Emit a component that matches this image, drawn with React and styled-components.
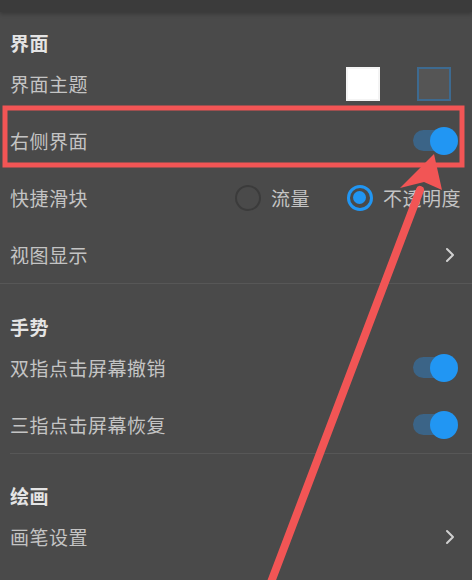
import React from "react";
import styled, { createGlobalStyle } from "styled-components";

const Global = createGlobalStyle`
  html, body { margin: 0; padding: 0; background: #4a4a4a; }
  body { font-family: "Noto Sans CJK SC", "Noto Sans", sans-serif; }
`;

const Page = styled.div`
  position: relative;
  width: 472px;
  height: 580px;
  overflow: hidden;
  background: #4a4a4a;
`;

const TopBar = styled.div`
  height: 12px;
  background: #3b3b3b;
  box-shadow: 0 2px 4px rgba(0,0,0,0.25);
`;

const Section = styled.section`
  display: flex;
  flex-direction: column;
  padding-top: ${p => p.$top}px;
`;

const Header = styled.div`
  height: 26px;
  display: flex;
  align-items: center;
  padding-left: 10px;
  font-size: 19px;
  font-weight: 700;
  color: #e4e4e4;
  letter-spacing: 0.5px;
`;

const Row = styled.div`
  height: 57px;
  display: flex;
  align-items: center;
  justify-content: space-between;
  padding: 0 13px 0 10px;
`;

const Label = styled.span`
  font-size: 19px;
  color: #c4c4c4;
  letter-spacing: 0.5px;
`;

const Divider = styled.div`
  height: 1px;
  background: #575757;
  margin-left: ${p => (p.$inset ? 10 : 0)}px;
`;

const Swatches = styled.div`
  display: flex;
  gap: 37px;
  margin-right: 8px;
`;

const Swatch = styled.div`
  width: 34px;
  height: 34px;
  box-sizing: border-box;
  background: ${p => (p.$light ? "#ffffff" : "#555555")};
  border: 2px solid ${p => (p.$selected ? "#3d6a90" : p.$light ? "#f4f4f4" : "#555")};
`;

const Toggle = styled.div`
  position: relative;
  width: 45px;
  height: 28px;
  margin-right: 1px;
  display: flex;
  align-items: center;
`;

const Track = styled.div`
  width: 34px;
  height: 21px;
  border-radius: 11px;
  background: #3b6487;
`;

const Knob = styled.div`
  position: absolute;
  right: 0;
  top: 0;
  width: 28px;
  height: 28px;
  border-radius: 50%;
  background: #2196f3;
`;

const Radios = styled.div`
  display: flex;
  align-items: center;
  gap: 37px;
  margin-right: -2px;
`;

const RadioItem = styled.div`
  display: flex;
  align-items: center;
  gap: 10px;
`;

const RadioCircle = styled.div`
  width: 26px;
  height: 26px;
  box-sizing: border-box;
  border-radius: 50%;
  border: ${p => (p.$on ? "3px solid #2196f3" : "2px solid #3b3b3b")};
  display: flex;
  align-items: center;
  justify-content: center;
  &::after {
    content: "";
    display: ${p => (p.$on ? "block" : "none")};
    width: 13px;
    height: 13px;
    border-radius: 50%;
    background: #2196f3;
  }
`;

const Chevron = styled.svg`
  width: 10px;
  height: 16px;
  margin-right: 4px;
`;

const Overlay = styled.svg`
  position: absolute;
  left: 0;
  top: 0;
  pointer-events: none;
`;

function Switch() {
  return (
    <Toggle>
      <Track />
      <Knob />
    </Toggle>
  );
}

function Arrow() {
  return (
    <Chevron viewBox="0 0 10 16">
      <path d="M2 2 L8 8 L2 14" fill="none" stroke="#d0d0d0" strokeWidth="2" strokeLinecap="round" strokeLinejoin="round" />
    </Chevron>
  );
}

export default function App() {
  return (
    <Page>
      <Global />
      <TopBar />
      <Section $top={17}>
        <Header>界面</Header>
        <Row>
          <Label>界面主题</Label>
          <Swatches>
            <Swatch $light />
            <Swatch $selected />
          </Swatches>
        </Row>
        <Row>
          <Label>右侧界面</Label>
          <Switch />
        </Row>
        <Row>
          <Label>快捷滑块</Label>
          <Radios>
            <RadioItem>
              <RadioCircle />
              <Label>流量</Label>
            </RadioItem>
            <RadioItem>
              <RadioCircle $on />
              <Label>不透明度</Label>
            </RadioItem>
          </Radios>
        </Row>
        <Row>
          <Label>视图显示</Label>
          <Arrow />
        </Row>
      </Section>
      <Divider />
      <Section $top={29}>
        <Header>手势</Header>
        <Row>
          <Label>双指点击屏幕撤销</Label>
          <Switch />
        </Row>
        <Row>
          <Label>三指点击屏幕恢复</Label>
          <Switch />
        </Row>
      </Section>
      <Divider $inset />
      <Section $top={28}>
        <Header>绘画</Header>
        <Row>
          <Label>画笔设置</Label>
          <Arrow />
        </Row>
      </Section>
      <Overlay width="472" height="580" viewBox="0 0 472 580">
        <rect x="5" y="108" width="457" height="57" fill="none" stroke="#f25555" strokeWidth="5" />
        <line x1="268" y1="590" x2="420" y2="190" stroke="#f25555" strokeWidth="8" strokeLinecap="round" />
        <polygon points="434,154 442,190 424,182 400,188" fill="#f25555" />
      </Overlay>
    </Page>
  );
}
